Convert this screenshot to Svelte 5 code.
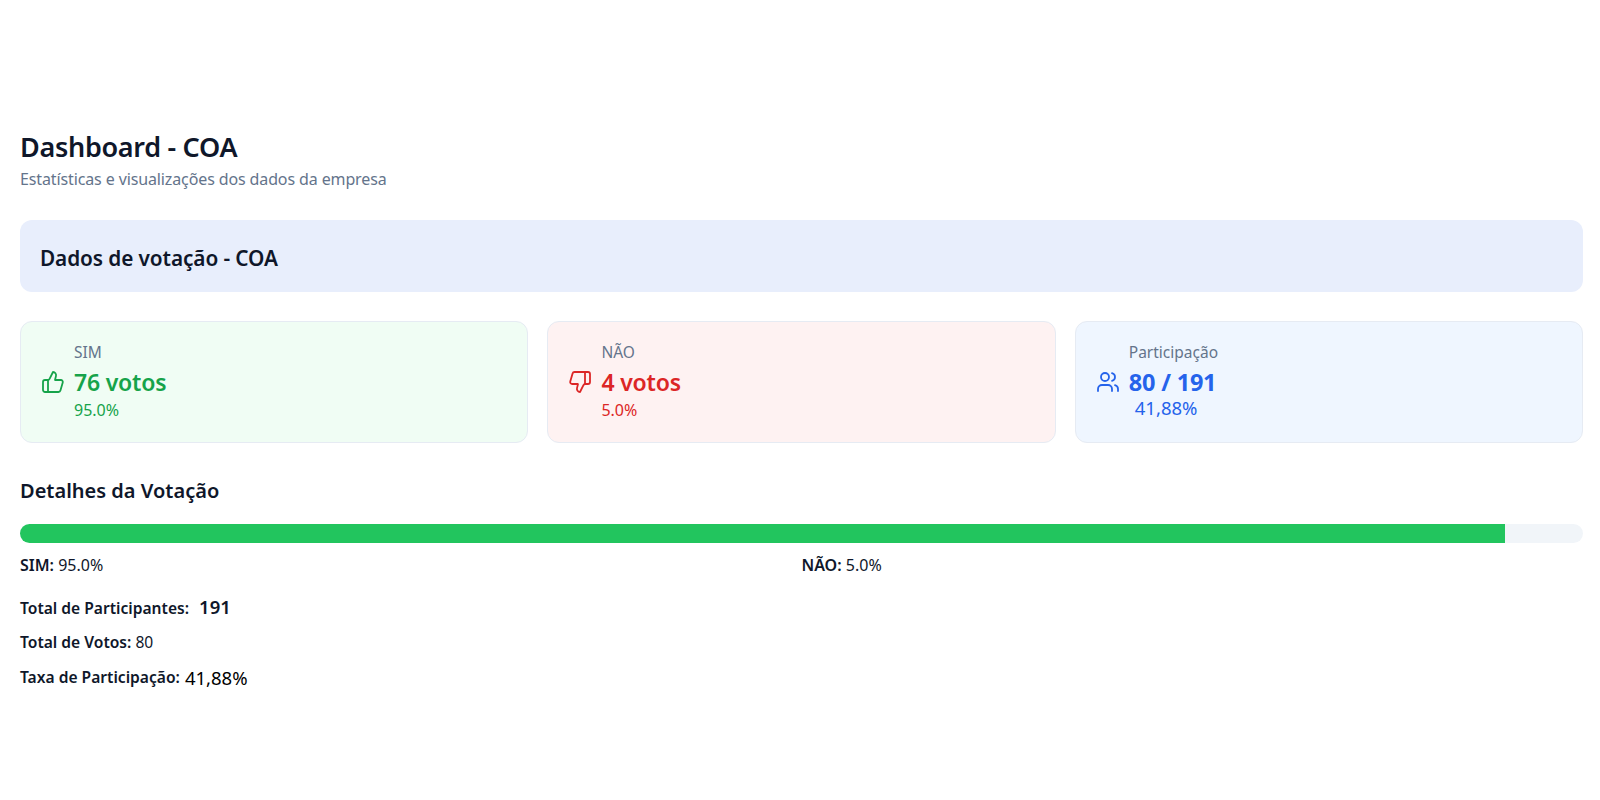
<script>
  const cards = [
    { kind: "yes", label: "SIM", value: "76 votos", note: "95.0%" },
    { kind: "no", label: "NÃO", value: "4 votos", note: "5.0%" },
    { kind: "part", label: "Participação", value: "80 / 191", note: "41,88%" },
  ];
</script>

<div class="page">
  <h1>Dashboard - COA</h1>
  <p class="subtitle">Estatísticas e visualizações dos dados da empresa</p>

  <div class="banner">Dados de votação - COA</div>

  <div class="cards">
    {#each cards as card}
      <div class="card {card.kind}">
        <svg class="icon" viewBox="0 0 24 24" fill="none" stroke="currentColor" stroke-linecap="round" stroke-linejoin="round">
          {#if card.kind === "yes"}
            <path d="M7 10v12" />
            <path d="M15 5.88 14 10h5.83a2 2 0 0 1 1.92 2.56l-2.33 8A2 2 0 0 1 17.5 22H4a2 2 0 0 1-2-2v-8a2 2 0 0 1 2-2h2.76a2 2 0 0 0 1.79-1.11L12 2a3.13 3.13 0 0 1 3 3.88Z" />
          {:else if card.kind === "no"}
            <path d="M17 14V2" />
            <path d="M9 18.12 10 14H4.17a2 2 0 0 1-1.92-2.56l2.33-8A2 2 0 0 1 6.5 2H20a2 2 0 0 1 2 2v8a2 2 0 0 1-2 2h-2.76a2 2 0 0 0-1.79 1.11L12 22a3.13 3.13 0 0 1-3-3.88Z" />
          {:else}
            <path d="M16 21v-2a4 4 0 0 0-4-4H6a4 4 0 0 0-4 4v2" />
            <circle cx="9" cy="7" r="4" />
            <path d="M22 21v-2a4 4 0 0 0-3-3.87" />
            <path d="M16 3.13a4 4 0 0 1 0 7.75" />
          {/if}
        </svg>
        <div class="card-text">
          <span class="label">{card.label}</span>
          <span class="value">{card.value}</span>
          <span class="note">{card.note}</span>
        </div>
      </div>
    {/each}
  </div>

  <h2>Detalhes da Votação</h2>

  <div class="bar"><div class="bar-fill" style="width: 95%"></div></div>
  <div class="bar-legend">
    <span><strong>SIM:</strong> 95.0%</span>
    <span><strong>NÃO:</strong> 5.0%</span>
  </div>

  <div class="totals">
    <p><strong>Total de Participantes:</strong> <span class="big-total">191</span></p>
    <p><strong>Total de Votos:</strong> 80</p>
    <p><strong>Taxa de Participação:</strong> <span class="rate">41,88%</span></p>
  </div>
</div>

<style>
  :global(body) {
    margin: 0;
    background: #fff;
    font-family: "Noto Sans", "Open Sans", sans-serif;
  }

  .page {
    padding: 130px 17px 0 20px;
    color: #0f172a;
  }

  h1 {
    margin: 0;
    font-size: 27px;
    line-height: 34px;
    font-weight: 600;
    letter-spacing: -0.3px;
  }

  .subtitle {
    margin: 4px 0 0;
    font-size: 16px;
    line-height: 22px;
    color: #64748b;
    letter-spacing: -0.12px;
  }

  .banner {
    margin-top: 30px;
    height: 72px;
    box-sizing: border-box;
    display: flex;
    align-items: center;
    padding: 3px 0 0 20px;
    background: #e8eefc;
    border-radius: 12px;
    font-size: 20.8px;
    font-weight: 600;
    letter-spacing: -0.1px;
  }

  .cards {
    margin-top: 29px;
    display: grid;
    grid-template-columns: repeat(3, 1fr);
    gap: 19.2px;
  }

  .card {
    height: 122px;
    box-sizing: border-box;
    display: flex;
    align-items: center;
    gap: 9px;
    padding-left: 20px;
    border: 1px solid #e6ebf3;
    border-radius: 12px;
  }

  .card.yes { background: #f0fdf4; color: #16a34a; }
  .card.no { background: #fef2f2; color: #dc2626; }
  .card.part { background: #eff6ff; color: #2563eb; }

  .icon {
    width: 24px;
    height: 24px;
    flex: none;
    stroke-width: 1.8;
  }

  .card-text {
    display: flex;
    flex-direction: column;
    padding-bottom: 3px;
  }

  .label {
    font-size: 15.5px;
    line-height: 22px;
    color: #64748b;
  }

  .value {
    font-size: 23px;
    line-height: 37px;
    padding-top: 1px;
    margin-bottom: -1px;
    font-weight: 600;
    letter-spacing: -0.2px;
  }

  .note {
    font-size: 16px;
    line-height: 20px;
  }

  .part .value {
    font-weight: 700;
    font-size: 23.5px;
    letter-spacing: -0.2px;
  }

  .part .note {
    font-size: 18.5px;
    line-height: 24px;
    margin-top: -4px;
    padding-left: 6px;
  }

  h2 {
    margin: 33px 0 0;
    font-size: 20px;
    line-height: 30px;
    font-weight: 600;
  }

  .bar {
    margin-top: 18px;
    height: 19px;
    background: #f1f5f9;
    border-radius: 10px;
    overflow: hidden;
  }

  .bar-fill {
    height: 100%;
    background: #22c55e;
  }

  .bar-legend {
    margin-top: 11px;
    display: grid;
    grid-template-columns: repeat(2, 1fr);
    font-size: 16px;
    line-height: 22px;
  }

  strong {
    font-weight: 600;
  }

  .totals {
    margin-top: 20px;
    font-size: 15.6px;
    line-height: 22px;
  }

  .totals p {
    margin: 0 0 12px;
  }

  .big-total {
    font-size: 18.5px;
    font-weight: 600;
    margin-left: 6px;
  }

  .rate {
    font-size: 18.5px;
    color: #000;
    position: relative;
    top: 2px;
    margin-left: 1px;
  }
</style>
